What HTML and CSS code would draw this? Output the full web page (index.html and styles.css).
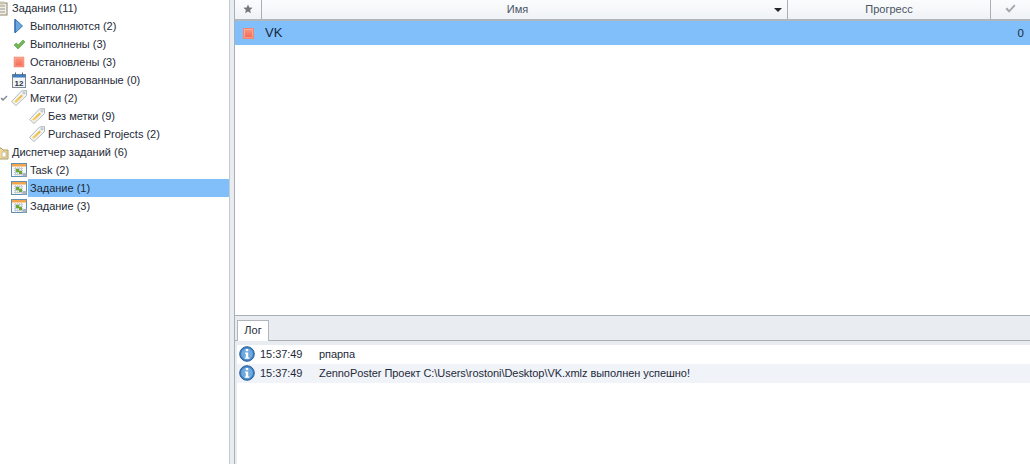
FILE: index.html
```html
<!DOCTYPE html>
<html lang="ru">
<head>
<meta charset="utf-8">
<title>Задания</title>
<link rel="stylesheet" href="styles.css">
</head>
<body>
<svg class="defs" width="0" height="0" aria-hidden="true">
  <defs>
    <linearGradient id="tagfill" x1="0" y1="1" x2="1" y2="0"><stop offset="0" stop-color="#f7d56a"/><stop offset="1" stop-color="#e4b83c"/></linearGradient>
    <linearGradient id="stopfill" x1="0" y1="0" x2="0" y2="1"><stop offset="0" stop-color="#fb9a84"/><stop offset="1" stop-color="#f2654e"/></linearGradient>
    <symbol id="tag" viewBox="0 0 16 16">
      <path d="M.5 11.500 L10.500 1 L15.500 .5 L15.500 5.500 L5 15.500 Z" fill="#f4f6f8" stroke="#aeb6be"/>
      <path d="M3 11.500 L10.500 4.500 L12 6 L5 13 Z" fill="url(#tagfill)"/>
      <circle cx="13" cy="3" r="1.100" fill="#fff" stroke="#9aa4ae" stroke-width=".7"/>
    </symbol>
    <symbol id="board" viewBox="0 0 16 14">
      <rect x=".5" y=".5" width="15" height="13" fill="#f6f8fa" stroke="#5f8fb2"/>
      <rect x="1" y="1" width="14" height="2.500" fill="#f2a54a"/>
      <path d="M3 5.500h9M3 7.500h9M3 9.500h9M3 11.500h9M4.500 4v8.500M6.500 4v8.500M8.500 4v8.500M10.500 4v8.500" stroke="#c4ccd2"/>
      <rect x="5" y="6" width="3" height="3" fill="#6aaa2e"/>
      <rect x="8" y="8" width="3" height="3" fill="#6aaa2e"/>
      <rect x="11.500" y="10" width="4" height="3.500" fill="#a8b4c0"/>
    </symbol>
    <symbol id="info" viewBox="0 0 16 16">
      <circle cx="8" cy="8" r="7.300" fill="#3f82c6" stroke="#2a5f98"/>
      <circle cx="8" cy="8" r="5.800" fill="#6fa9de"/>
      <rect x="6.800" y="3" width="2.400" height="2.200" fill="#fff"/>
      <path d="M6 6.500h3.200v5h1.200v1.200H5.800v-1.200h1V7.700H6z" fill="#fff"/>
    </symbol>
    <symbol id="stop" viewBox="0 0 11 11">
      <rect x=".5" y=".5" width="10" height="10" fill="url(#stopfill)" stroke="#f28672"/>
      <rect x="1.500" y="1.500" width="8" height="8" fill="none" stroke="#fcb8aa" stroke-width=".6"/>
    </symbol>
  </defs>
</svg>
<div class="app">
  <aside class="tree">
    <div class="node root"><svg class="ico-root" viewBox="0 0 9 15" width="9" height="15"><rect x="-6" y="2" width="13" height="12" fill="#f5efdc" stroke="#8c8474"/><path d="M-3 5h8M-3 8h8M-3 11h8" stroke="#8c97a5"/><rect x="-2" y=".5" width="6" height="3" fill="#c9c2ac"/></svg><span>Задания (11)</span></div>
    <div class="node lvl1"><svg class="ico" viewBox="0 0 16 16"><path d="M4 1 L11.500 8 L4 15 Z" fill="#6ba6de" stroke="#3b78b4"/><path d="M4 1.500 V14.500" stroke="#2f6ca8" stroke-width="1.200"/></svg><span>Выполняются (2)</span></div>
    <div class="node lvl1"><svg class="ico" viewBox="0 0 16 16"><path d="M3 9 L5.500 7 L7 9 L12 4 L14 6 L7 13 Z" fill="#72b658" stroke="#559a40" stroke-width=".6"/></svg><span>Выполнены (3)</span></div>
    <div class="node lvl1"><svg class="ico" viewBox="-2.500 -2.500 16 16"><use href="#stop" width="11" height="11"/></svg><span>Остановлены (3)</span></div>
    <div class="node lvl1"><svg class="ico" viewBox="0 0 16 16"><rect x="1.500" y="2.500" width="13" height="13" fill="#f3f5f7" stroke="#7c8894"/><rect x="1.500" y="2.500" width="13" height="3" fill="#3f7fc0"/><path d="M4.500 .5v3M11.500 .5v3" stroke="#56606a"/><text class="cal" x="8" y="14" text-anchor="middle">12</text></svg><span>Запланированные (0)</span></div>
    <div class="node lvl1"><svg class="check" viewBox="0 0 8 8" width="8" height="8"><path d="M.5 4.500 L2 3.500 L3 5 L6.500 1.500 L7.500 2.500 L3 7 Z" fill="#808890"/></svg><svg class="ico"><use href="#tag"/></svg><span>Метки (2)</span></div>
    <div class="node lvl2"><svg class="ico"><use href="#tag"/></svg><span>Без метки (9)</span></div>
    <div class="node lvl2"><svg class="ico"><use href="#tag"/></svg><span>Purchased Projects (2)</span></div>
    <div class="node root"><svg class="ico-root" viewBox="0 0 9 15" width="9" height="15"><path d="M-6 3 H1 L3 5 H8 V14 H-6 Z" fill="#f3dc9a" stroke="#a89a70"/><rect x="2" y="7" width="4" height="5" fill="#fff" stroke="#a89a70" stroke-width=".6"/></svg><span>Диспетчер заданий (6)</span></div>
    <div class="node lvl1"><svg class="ico-board"><use href="#board"/></svg><span>Task (2)</span></div>
    <div class="node lvl1 selected"><svg class="ico-board"><use href="#board"/></svg><span>Задание (1)</span></div>
    <div class="node lvl1"><svg class="ico-board"><use href="#board"/></svg><span>Задание (3)</span></div>
  </aside>
  <div class="splitter"></div>
  <main class="content">
    <section class="grid">
      <div class="head">
        <div class="col col-star"><svg viewBox="0 0 12 12" width="10" height="10"><path d="M6 .5 L7.600 4.300 L11.500 4.600 L8.500 7.200 L9.500 11.200 L6 9 L2.500 11.200 L3.500 7.200 L.5 4.600 L4.400 4.300 Z" fill="#74787c"/></svg></div>
        <div class="col col-name">Имя<i class="sort"></i></div>
        <div class="col col-progress">Прогресс</div>
        <div class="col col-done"><svg viewBox="0 0 12 12" width="11" height="11"><path d="M.5 6.500 L2.500 5 L4.500 7.500 L10 1.500 L11.500 3 L4.500 10.500 Z" fill="#a4a8ac"/></svg></div>
      </div>
      <div class="row">
        <svg class="row-ico"><use href="#stop"/></svg>
        <span class="row-name">VK</span>
        <span class="row-count">0</span>
      </div>
    </section>
    <section class="dock">
      <div class="tabs"><div class="tab">Лог</div></div>
      <div class="log">
        <div class="log-list">
          <div class="entry"><svg class="info"><use href="#info"/></svg><span class="time">15:37:49</span><span>рпарпа</span></div>
          <div class="entry alt"><svg class="info"><use href="#info"/></svg><span class="time">15:37:49</span><span>ZennoPoster Проект C:\Users\rostoni\Desktop\VK.xmlz выполнен успешно!</span></div>
        </div>
      </div>
    </section>
  </main>
</div>
</body>
</html>
```

FILE: styles.css
```css
* { box-sizing: border-box; }
html, body { margin: 0; height: 100%; overflow: hidden; }
body { font: 11px/18px "Liberation Sans", sans-serif; color: #1e2a38; background: #fff; }
.defs { position: absolute; }
.app { display: flex; height: 464px; }

.tree { width: 229px; margin-top: -1px; background: #fff; flex: none; }
.node { display: flex; align-items: center; height: 18px; position: relative; font-size: 11px; white-space: nowrap; }
.node span { margin-left: 3px; }
.lvl1 { padding-left: 11px; }
.lvl2 { padding-left: 29px; }
.ico { width: 16px; height: 16px; flex: none; }
.ico-root { flex: none; }
.ico-board { width: 16px; height: 14px; flex: none; }
.check { position: absolute; left: 0; top: 5px; }
.cal { font: bold 8px "Liberation Sans", sans-serif; fill: #2a3340; }
.selected { background: linear-gradient(to right, #fff 28px, #80bffa 28px); }

.splitter { width: 6px; flex: none; background: #e9edf1; border-left: 1px solid #c6cbd1; border-right: 1px solid #a9afb6; }
.content { flex: 1; min-width: 0; display: flex; flex-direction: column; }

.grid { height: 316px; flex: none; border-bottom: 1px solid #a9afb6; background: #fff; }
.head { display: flex; height: 21px; background: linear-gradient(#fbfcfd, #eff2f6); border-bottom: 2px solid #b1b6bc; color: #4a5462; font-size: 11px; }
.col { display: flex; align-items: center; justify-content: center; border-right: 1px solid #a9afb6; position: relative; padding-bottom: 2px; }
.col-star { width: 27px; }
.col-name { width: 526px; padding-right: 14px; }
.col-progress { width: 203px; }
.col-done { flex: 1; border-right: 0; }
.sort { position: absolute; right: 5px; top: 8px; border: 4px solid transparent; border-top-color: #22262a; border-bottom: 0; }
.row { display: flex; align-items: center; height: 24px; background: #80bffa; padding: 0 6px 0 8px; font-size: 13px; }
.row-ico { width: 11px; height: 11px; flex: none; }
.row-name { margin-left: 11px; color: #18263e; }
.row-count { margin-left: auto; font-size: 11.5px; }

.dock { flex: 1; min-height: 0; background: #e9edf1; display: flex; flex-direction: column; }
.tabs { height: 24px; flex: none; padding: 4px 0 0 2px; position: relative; z-index: 1; }
.tab { width: 32px; height: 21px; background: #fff; border: 1px solid #b1b6bc; border-bottom: 0; text-align: center; line-height: 19px; font-size: 11px; }
.log { flex: 1; min-height: 0; display: flex; border-top: 1px solid #a9afb6; padding: 4px 0 0 2px; }
.log-list { flex: 1; background: #fff; }
.entry { display: flex; align-items: center; height: 19px; padding-bottom: 1px; font-size: 11px; letter-spacing: -.05px; }
.alt { background: #f0f3f8; }
.info { width: 16px; height: 16px; margin-left: 2px; flex: none; }
.time { width: 59px; margin-left: 5px; flex: none; }
```
